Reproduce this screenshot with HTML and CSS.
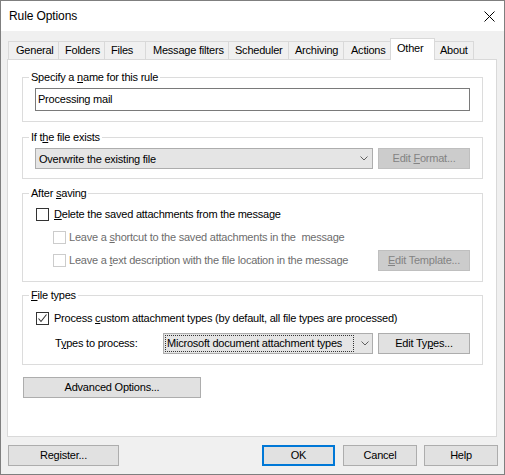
FILE: index.html
```html
<!DOCTYPE html>
<html>
<head>
<meta charset="utf-8">
<link rel="stylesheet" href="styles.css">
</head>
<body>
<div class="window">
  <div class="titlebar">
    <span class="title">Rule Options</span>
    <svg class="close" width="11" height="11" viewBox="0 0 11 11"><path d="M0.5 0.5 L10.5 10.5 M10.5 0.5 L0.5 10.5" stroke="#000" stroke-width="1"/></svg>
  </div>
  <div class="body">
    <div class="tabs">
      <div class="tab t-general">General</div>
      <div class="tab t-folders">Folders</div>
      <div class="tab t-files">Files</div>
      <div class="tab t-filters">Message filters</div>
      <div class="tab t-sched">Scheduler</div>
      <div class="tab t-arch">Archiving</div>
      <div class="tab t-actions">Actions</div>
      <div class="tab t-other selected">Other</div>
      <div class="tab t-about">About</div>
    </div>
    <div class="panel">
      <fieldset class="group g-name">
        <legend>Specify a <u>n</u>ame for this rule</legend>
        <div class="textbox">Processing mail</div>
      </fieldset>

      <fieldset class="group g-exists">
        <legend>If t<u>h</u>e file exists</legend>
        <div class="line">
          <div class="select sel-wide">
            <span class="sel-text">Overwrite the existing file</span>
            <svg class="chev" width="8" height="5" viewBox="0 0 8 5"><polyline points="0.5,0.5 4,4 7.5,0.5" fill="none" stroke="#606060" stroke-width="1"/></svg>
          </div>
          <div class="btn disabled w92"><span>Edit <u>F</u>ormat...</span></div>
        </div>
      </fieldset>

      <fieldset class="group g-after">
        <legend>After <u>s</u>aving</legend>
        <div class="crow">
          <span class="cbox"></span>
          <span class="clabel"><u>D</u>elete the saved attachments from the message</span>
        </div>
        <div class="crow indent dis">
          <span class="cbox"></span>
          <span class="clabel">Leave a <u>s</u>hortcut to the saved attachments in the &nbsp;message</span>
        </div>
        <div class="crow indent dis">
          <span class="cbox"></span>
          <span class="clabel">Leave a <u>t</u>ext description with the file location in the message</span>
          <div class="btn disabled w92 push"><span><u>E</u>dit Template...</span></div>
        </div>
      </fieldset>

      <fieldset class="group g-types">
        <legend><u>F</u>ile types</legend>
        <div class="crow">
          <span class="cbox checked"><svg width="11" height="11" viewBox="0 0 11 11"><polyline points="1.5,5.5 4,8.5 9.5,1.5" fill="none" stroke="#333" stroke-width="1.1"/></svg></span>
          <span class="clabel">Process <u>c</u>ustom attachment types (by default, all file types are processed)</span>
        </div>
        <div class="line types-line">
          <span class="types-label">T<u>y</u>pes to process:</span>
          <div class="select sel-focus">
            <span class="focus-rect">Microsoft document attachment types</span>
            <svg class="chev" width="8" height="5" viewBox="0 0 8 5"><polyline points="0.5,0.5 4,4 7.5,0.5" fill="none" stroke="#606060" stroke-width="1"/></svg>
          </div>
          <div class="btn w92"><span>Edit Ty<u>p</u>es...</span></div>
        </div>
      </fieldset>

      <div class="btn adv"><span>Advanced Options...</span></div>
    </div>
    <div class="footer">
      <div class="btn b-register"><span>Register...</span></div>
      <div class="btn b-ok"><span>OK</span></div>
      <div class="btn b-cancel"><span>Cancel</span></div>
      <div class="btn b-help"><span>Help</span></div>
    </div>
  </div>
</div>
</body>
</html>
```

FILE: styles.css
```css
* { box-sizing: border-box; }
html, body { margin: 0; padding: 0; background: #ffffff; }
body {
  font-family: "Liberation Sans", Arial, sans-serif;
  font-size: 11px;
  letter-spacing: -0.22px;
  color: #000;
}
u { text-decoration: underline; text-underline-offset: 1px; }

.window {
  width: 505px;
  height: 475px;
  border: 1px solid #7f7f7f;
  background: #f0f0f0;
  display: flex;
  flex-direction: column;
}

.titlebar {
  height: 30px;
  background: #ffffff;
  display: flex;
  align-items: center;
  justify-content: space-between;
  padding: 0 9px 0 8px;
}
.title { font-size: 12px; letter-spacing: -0.1px; padding-bottom: 1px; }
.close { display: block; }

.body {
  flex: 1;
  padding: 7px 0 0 6px;
}

.tabs {
  display: flex;
  align-items: flex-start;
  height: 21px;
  margin-left: 1px;
}
.tab {
  height: 18px;
  margin-top: 3px;
  border: 1px solid #d9d9d9;
  border-bottom: none;
  background: #f0f0f0;
  padding-left: 6px;
  line-height: 16px;
  white-space: nowrap;
}
.tab + .tab { margin-left: -1px; }
.t-general { width: 51px; padding-left: 7px; }
.t-folders { width: 47px; }
.t-files { width: 42px; }
.t-filters { width: 84px; padding-left: 7px; }
.t-sched { width: 61px; }
.t-arch { width: 56px; }
.t-actions { width: 48px; padding-left: 7px; }
.t-other { width: 45px; }
.t-about { width: 40px; padding-left: 5px; }
.tab.selected {
  height: 22px;
  margin-top: 0;
  background: #ffffff;
  line-height: 18px;
  position: relative;
  z-index: 1;
}

.panel {
  width: 490px;
  height: 378px;
  background: #ffffff;
  border: 1px solid #d9d9d9;
  padding: 10px 13px 0 14px;
}

.group {
  margin: 0;
  min-width: 0;
  width: 461px;
  border: 1px solid #dcdcdc;
  padding: 4px 12px 9px 12px;
}
.group legend {
  padding: 0 2px;
  margin-left: -6px;
  line-height: 14px;
  height: 14px;
}
.g-name { padding-bottom: 10px; }
.g-exists { margin-top: 8px; }
.g-after { margin-top: 7px; padding-top: 3px; }
.g-types { margin-top: 6px; padding-top: 5px; padding-bottom: 10px; }

.textbox {
  height: 23px;
  border: 1px solid #7a7a7a;
  padding-left: 2px;
  line-height: 21px;
  background: #fff;
}

.line {
  display: flex;
  align-items: flex-start;
  gap: 5px;
}
.select {
  height: 21px;
  border: 1px solid #adadad;
  background: #e5e5e5;
  display: flex;
  align-items: center;
  justify-content: space-between;
  padding: 0 4px 0 2px;
}
.sel-wide { width: 338px; }
.sel-text { padding-left: 1px; }
.chev { display: block; }

.btn {
  height: 21px;
  border: 1px solid #adadad;
  background: #e1e1e1;
  display: flex;
  align-items: center;
  justify-content: center;
  white-space: nowrap;
  padding-bottom: 1px;
}
.btn.disabled {
  background: #cccccc;
  border-color: #bfbfbf;
  color: #838383;
}
.w92 { width: 92px; }
.push { margin-left: auto; }

.crow {
  height: 23px;
  display: flex;
  align-items: center;
  padding-left: 1px;
}
.crow.indent { padding-left: 18px; }
.cbox {
  width: 13px;
  height: 13px;
  border: 1px solid #333333;
  background: #fff;
  flex: none;
  margin-right: 5px;
  display: flex;
  align-items: center;
  justify-content: center;
}
.crow.dis .cbox { border-color: #cccccc; margin-right: 3px; }
.crow.dis .clabel { color: #6d6d6d; }
.clabel { white-space: nowrap; padding-bottom: 1px; }

.types-line { margin-top: 3px; gap: 0; align-items: center; }
.types-label { width: 128px; padding-left: 20px; padding-bottom: 1px; }
.sel-focus { width: 210px; padding: 0 3px 0 1px; margin-right: 5px; }
.focus-rect {
  flex: 1;
  height: 17px;
  border: 1px dotted #333;
  line-height: 15px;
  padding-left: 1px;
  margin-right: 7px;
}

.adv {
  width: 178px;
  margin: 12px 0 0 1px;
}

.footer {
  display: flex;
  margin-top: 8px;
}
.b-register { width: 111px; margin-left: 1px; }
.b-ok { width: 73px; margin-left: 143px; border: 2px solid #0078d7; }
.b-cancel { width: 74px; margin-left: 8px; }
.b-help { width: 74px; margin-left: 7px; }
```
